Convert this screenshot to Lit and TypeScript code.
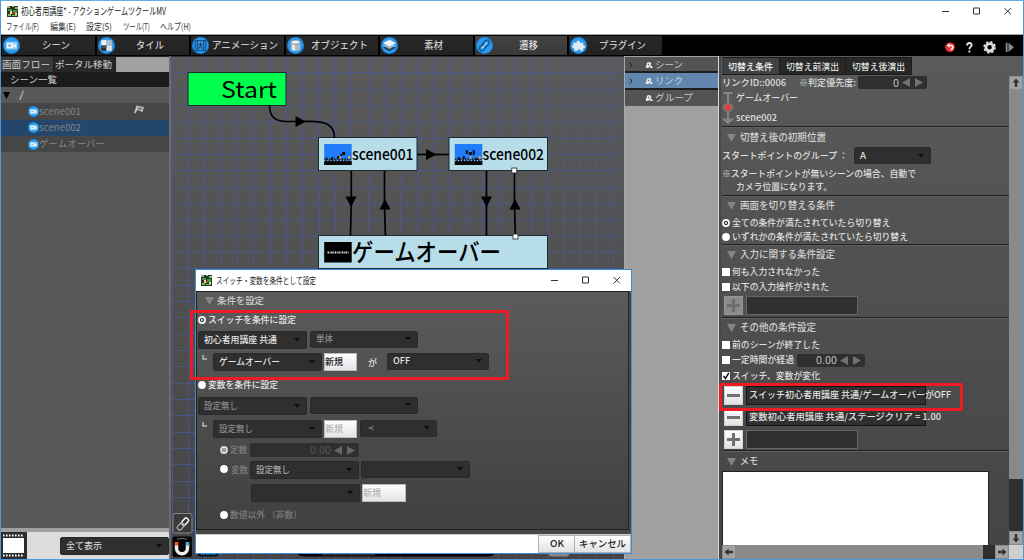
import { LitElement, html, svg, css, nothing } from "lit";
import { customElement, property } from "lit/decorators.js";

/** A label squeezed or stretched horizontally to an exact width. */
@customElement("fit-label")
class FitLabel extends LitElement {
  @property() text = "";
  @property({ type: Number }) w = 0;
  static styles = css`
    :host { display: block; flex: none; white-space: pre; line-height: 1; }
    span { display: inline-block; transform-origin: 0 50%; white-space: pre; }
  `;
  render() {
    return html`<span>${this.text}</span>`;
  }
  updated() {
    const el = this.renderRoot.querySelector("span") as HTMLElement;
    el.style.transform = "none";
    const natural = el.getBoundingClientRect().width;
    this.style.width = `${this.w}px`;
    if (natural) el.style.transform = `scaleX(${this.w / natural})`;
  }
}

const t = (text: string, w: number, cls = "") =>
  html`<fit-label class=${cls} .text=${text} .w=${w}></fit-label>`;

const appIcon = html`<svg class="app-icon" viewBox="0 0 11 11">
  <rect width="11" height="11" fill="#26382a" />
  <path d="M0 0h3v2H0zM5 0h2v1H5zM8 1h3v2H8z" fill="#9bb08a" />
  <path d="M1 3h4v2H1zM6 4h4v3H6z" fill="#3f9a45" />
  <path d="M3 5h2v3H3zM8 7h2v2H8z" fill="#e8d9a0" />
  <path d="M5 6h2v2H5z" fill="#c43a2c" />
  <path d="M1 8h3v2H1zM5 9h5v1H5z" fill="#74c45a" />
</svg>`;

const disc = svg`<circle cx="8" cy="8" r="8" fill="#1a86e0"/><circle cx="8" cy="8" r="7" fill="#2b9bf0"/>`;

const glyphs: Record<string, unknown> = {
  scene: svg`<path d="M2.600 4.400h10.800v7.400H2.600z" fill="#8ccaf4"/><path d="M3.600 5.600h6v5h-6zM9.800 8l2.800-2v4.400L9.800 9z" fill="#f1f8fc"/><path d="M5 7h2.600v2H5z" fill="#62aee2"/>`,
  tile: svg`<path d="M3 3h5v5H3z" fill="#f2f2f2"/><path d="M8 3h5v5H8z" fill="#b5bcc2"/><path d="M3 8h5v5H3z" fill="#2a2d30"/><path d="M8 8h5v5H8z" fill="#e2e4e6"/><path d="M3 8h5v2H3z" fill="#54585c"/>`,
  anim: svg`<rect x="3" y="3.400" width="10" height="9.400" fill="#3c96dc" stroke="#0c538f"/><path d="M5 3.400v9.400M11 3.400v9.400M8 5v3M6.200 7h3.600M8 8l-1.600 3M8 8l1.600 3" stroke="#0b4377" fill="none"/>`,
  object: svg`<path d="M3.600 4.800v6.400c0 2.400 8.800 2.400 8.800 0V4.800z" fill="#b3bcc1"/><path d="M5 6v6.200c1 .5 2 .6 2.600.7V6.500z" fill="#e6eaec"/><ellipse cx="8" cy="4.800" rx="4.400" ry="1.900" fill="#eef2f3" stroke="#63727c" stroke-width=".7"/>`,
  asset: svg`<path d="M1.800 10.200 8 7l6.200 3.200L8 13.500z" fill="#274252"/><path d="M1.800 7.900 8 4.800l6.200 3.100L8 11.200z" fill="#8fb9d0"/><path d="M1.800 5.600 8 2.500l6.200 3.100L8 8.900z" fill="#f0f5f7"/>`,
  link: svg`<g fill="none" stroke="#175080" stroke-width="1.100"><rect x="7.200" y="2.800" width="4.600" height="6.600" rx="2.200" transform="rotate(42 9.500 6)"/><rect x="4" y="6.600" width="4.600" height="6.600" rx="2.200" transform="rotate(42 6.300 10)"/></g><path d="M5.800 10.400 10.200 5.600" stroke="#b6daf0" stroke-width="1.200"/>`,
  plugin: svg`<path d="M3 5.500h3.200c-.8-2.600 3.900-2.600 3.200 0h3v2.600c2.600-.6 2.600 3 0 2.400V13H9.600c.5-2-2.900-2-2.400 0H4v-2.500c-2.500.5-2.500-2.600-1-2.400z" fill="#dfe9ee"/>`,
};

const round = (name: string, cls: string) =>
  html`<svg class=${cls} viewBox="0 0 16 16">${disc}${glyphs[name]}</svg>`;

const film = svg`<rect width="26" height="27" fill="#2c2c2c"/><rect x="2" y="6" width="21" height="15" fill="#fff"/>
  <path d="M2 3.500h21M2 23.500h21" stroke="#fff" stroke-width="2" stroke-dasharray="1.600 1.400"/>`;

const tabs: [string, string, number][] = [
  ["scene", "シーン", 28],
  ["tile", "タイル", 28],
  ["anim", "アニメーション", 66],
  ["object", "オブジェクト", 57],
  ["asset", "素材", 19],
  ["link", "遷移", 19],
  ["plugin", "プラグイン", 47],
];

const GRID = 16.33;

@customElement("app-root")
class AppRoot extends LitElement {
  static styles = css`
    :host { display: block; width: 1024px; height: 560px; overflow: hidden; font: 9.2px "Noto Sans CJK JP", sans-serif; color: #dadada; }
    * { box-sizing: border-box; }
    svg { display: block; flex: none; }
    .window { position: relative; width: 1024px; height: 560px; border: 1px solid #4e97dc; border-top: 1px solid #6aaae6; background: #555; display: flex; flex-direction: column; }
    .titlebar { height: 20px; background: #fff; color: #222; display: flex; align-items: center; padding: 0 12px 0 6px; gap: 3px; font-size: 10px; }
    .app-icon { width: 11px; height: 11px; }
    .win-ctl { margin-left: auto; width: 70px; height: 8px; }
    .menu { height: 14px; background: #fff; color: #333; display: flex; align-items: center; padding: 0 0 1px 5px; gap: 10.500px; font-size: 9.200px; border-bottom: 1px solid #a8a8a8; }
    .tabbar { height: 21px; background: #000; display: flex; padding: 1px 0 1px 1px; gap: 2px; font-size: 9.800px; font-weight: 500; color: #c9c9c9; }
    .tab { width: 92.500px; height: 19px; background: linear-gradient(#292929, #222); display: flex; align-items: center; padding-left: 1px; }
    .tab.on { background: linear-gradient(#434343, #383838); color: #ddd; }
    .tab svg { width: 17px; height: 17px; }
    .tab-label { flex: 1; display: flex; justify-content: center; padding-right: 3px; }
    .tools { margin-left: auto; padding: 3px 7px 0 0; }
    .body { flex: 1; display: flex; min-height: 0; }

    .tree { width: 168px; background: #595959; display: flex; flex-direction: column; color: #d0d0d0; border-top: 1px solid #222; }
    .tree-tabs { display: flex; height: 15px; background: #a0a0a0; font-size: 9.500px; }
    .tree-tabs div { background: #3a3a3a; padding: 3px 3px 0 1px; border-right: 1px solid #1a1a1a; }
    .tree-tabs div + div { background: #272727; }
    .tree-title { height: 15px; background: #1b1b1b; padding: 3px 0 0 9px; font-size: 9.500px; }
    .tree-row { height: 16.330px; display: flex; align-items: center; color: #858585; font-size: 9.500px; background: #464646; padding-left: 27px; }
    .tree-row.root { background: none; padding-left: 2px; gap: 9px; color: #ddd; }
    .tree-row.on { background: #24466b; }
    .tree-row svg.ball { width: 11px; height: 11px; }
    .flag { margin: -3px 0 0 53px; }
    .tree-foot { margin-top: auto; height: 31px; border-top: 4px solid #a0a0a0; background: #dcdcdc; display: flex; justify-content: space-between; align-items: center; font-weight: 500; }
    .divider { width: 2px; background: #6c6c6c; }
    .canvas { position: relative; width: 453px; background: linear-gradient(#5a5a5a, #444); overflow: hidden; }
    .layers { width: 95px; background: #a0a0a0; border-left: 1px solid #a8a8a8; border-right: 1px solid #d8d8d8; display: flex; flex-direction: column; padding-top: 1px; }
    .layer { height: 16.330px; background: #535353; border-bottom: 2px solid #1d1d1d; display: flex; align-items: center; padding: 1px 0 0 4px; font-size: 9.500px; color: #c8c8c8; }
    .layer.on { background: #6287ae; color: #c3d0dd; }
    .layer:last-child { border-bottom: 1px solid #555; }
    .layer svg.chev { width: 4px; height: 6px; margin-right: 12px; }
    .layer svg.hand { width: 8px; height: 8px; margin-right: 2px; }

    .props { flex: 1; display: grid; grid-template-columns: 1fr 14px; grid-template-rows: 1fr 14px; background: linear-gradient(#5a5a5a, #444); border-left: 2px solid #484848; color: #dedede; font-weight: 500; }
    .fields { display: grid; grid-template-rows: 20px 13px 37px 21px 17px 31px 20px 15px 14px 20px 15px 15px 23px 20px 15px 16px 16px 22px 22px 22px 21px 74px; padding-left: 1px; }
    .fields > div { display: flex; align-items: center; min-height: 0; }
    .fields > .ptabs { align-items: flex-start; padding-top: 1px; font-size: 9.500px; }
    .ptab { height: 18px; padding: 4px 6px 0; background: #272727; border: 1px solid #1c1c1c; border-left: 0; }
    .ptab.on { background: #414141; color: #f0f0f0; }
    .head { border-top: 1px solid #222; box-shadow: inset 0 1px #606060; padding: 1px 0 0 5px; gap: 4px; font-size: 9.700px; color: #cfcfcf; }
    .head svg { width: 9px; height: 8px; }
    .num { display: flex; align-items: center; justify-content: flex-end; gap: 3px; background: #2f2f2f; border-radius: 2px; height: 13px; padding-right: 4px; color: #c0c0c0; font-size: 10px; font-weight: 400; }
    .num svg { width: 21px; height: 9px; }
    .sel { background: #2f2f2f; border: 1px solid #292929; border-radius: 2px; height: 18px; display: flex; align-items: center; padding: 0 6px 0 5px; }
    .sel svg { width: 6px; height: 4px; margin-left: auto; opacity: .9; }
    .sel.short { height: 17px; }
    .w68 { width: 68px; } .w69 { width: 69px; } .w77 { width: 77px; } .w101 { width: 102px; } .w108 { width: 108.500px; } .w109 { width: 109px; }
    .num.w108 { height: 14px; }
    .dim { color: #8a8a8a; }
    .soft { color: #a5a5a5; }
    .links { gap: 2px; }
    .ends { display: flex; flex-direction: column; gap: 11px; }
    .g2 { width: 2px; } .g3 { width: 3px; } .g6 { width: 6px; } .g13 { width: 13px; }
    .fields > .note { flex-direction: column; align-items: flex-start; padding-top: 5px; gap: 4px; }
    .note .second { margin-left: 14px; }
    .mark { width: 8px; height: 8px; margin-right: 2px; }
    .btn { width: 19px; height: 19px; background: linear-gradient(#fff, #e2e2e2); border: 1px solid #d0d0d0; flex: none; display: flex; align-items: center; justify-content: center; }
    .btn svg { width: 13px; height: 13px; }
    .btn.off { background: #8b8b8b; border-color: #979797; }
    .item { padding-left: 2px; gap: 3px; }
    .box { height: 19px; width: 112px; background: #303030; border: 1px solid #666; }
    .box.dark { width: 180px; border-color: #141414; display: flex; align-items: center; padding-left: 2px; white-space: nowrap; color: #e2e2e2; }
    .item.low .btn, .item.low .box { height: 18px; }
    .memo { width: 267px; height: 74px; background: #fff; border: 1px solid #222; border-bottom: 0; }
    .vscroll { margin-top: 20px; background: #2f2f2f; display: flex; flex-direction: column; }
    .vscroll .thumb { height: 389px; background: #898989; }
    .arrow { width: 14px; height: 14px; background: #a3a3a3; border: 1px solid #8a8a8a; }
    .arrow svg { width: 12px; height: 12px; }
    .vscroll .arrow:last-child { margin-top: auto; }
    .hscroll { display: flex; background: #2f2f2f; margin-left: 1px; }
    .hscroll .thumb { width: 247px; background: #898989; }
    .hscroll .arrow:last-child { margin-left: auto; }
    .corner { background: #cfcfcf; }

    .dialog { position: absolute; left: 194px; top: 268px; width: 437px; height: 284.500px; border: 1px solid #3c8fd6; background: #484848; display: flex; flex-direction: column; }
    .dtitle { height: 20.500px; background: #fff; color: #222; display: flex; align-items: center; padding: 0 11px 0 5px; gap: 4px; font-size: 9px; }
    .dbody { width: 432.500px; height: 239px; border: 1px solid #222; background: linear-gradient(#5b5b5b, #404040); display: grid; grid-template-rows: 18px 20px 22px 22px 22px 23px 22px 19px 23px 22px 21px; padding-left: 1px; color: #e4e4e4; font-weight: 500; }
    .dbody > div { display: flex; align-items: center; }
    .dbody > .top { align-items: flex-start; gap: 2.500px; padding-top: 1px; }
    .dbody > .dhead { padding-left: 7px; gap: 3px; font-size: 9.500px; color: #ccc; }
    .dhead svg { width: 9px; height: 8px; }
    .elbow { width: 5px; height: 5px; margin: 2px 6px 0 4px; }
    .dbody > .nest { gap: 0; }
    .nest .new { margin: 0 2.500px 0 2.500px; }
    .new { height: 18px; width: 33px; background: linear-gradient(#fff, #e4e4e4); border: 1px solid #bbb; color: #222; display: flex; align-items: center; }
    .new.off { color: #b5b5b5; }
    .new.wide { width: 44px; }
    .ga { padding: 5px 10px 0 8.500px; }
    .sub { padding-left: 22px; }
    .sub .dim { margin-right: 3px; color: #7d7d7d; }
    .dbody > .sub.top .mark { margin-top: 4px; margin-right: 0; }
    .dbody > .sub.top .dim.lbl { margin: 4px 0 0; }
    .deep { padding-left: 53px; }
    .num.dim { color: #555; }
    .dfoot { margin-top: auto; height: 18.500px; background: #fff; display: flex; justify-content: flex-end; color: #222; font-weight: 500; font-size: 9.500px; border-top: 1px solid #ccc; }
    .dfoot div { background: linear-gradient(#fff, #e2e2e2); border: 1px solid #b0b0b0; display: flex; align-items: center; justify-content: center; width: 37px; }
    .dfoot div + div { width: 56px; border-left: 0; }
    .mark-red { position: absolute; border: 3px solid #ed1c24; }
    .mark-red.a { left: 189px; top: 309px; width: 319px; height: 70px; }
    .mark-red.b { left: 718px; top: 382px; width: 244px; height: 28px; }
  `;

  tri = html`<svg viewBox="0 0 9 8"><path d="M0 0h9L4.500 8z" fill="#858585" /></svg>`;
  caret = html`<svg viewBox="0 0 6 4"><path d="M0 0h6L3 3.600z" fill="#0c0c0c" /></svg>`;

  winCtl() {
    return html`<svg class="win-ctl" viewBox="0 0 70 8"><path d="M1 4.500h7M32.500 1h6v6h-6zM63.500 1l6.500 6.500M70 1l-6.500 6.500" fill="none" stroke="#333" stroke-width="1" /></svg>`;
  }
  spin(w: string, text: string, tw: number, cls = "", fill = "#727272") {
    return html`<div class="num ${w} ${cls}">${t(text, tw)}<svg viewBox="0 0 21 9"><path d="M8 0v9L0 4.500zM13 0v9l8-4.500z" fill=${fill} /></svg></div>`;
  }
  sel(w: string, text = "", tw = 0, cls = "") {
    return html`<div class="sel ${w} ${cls}">${text ? t(text, tw) : nothing}${this.caret}</div>`;
  }
  head(text: string, w: number) {
    return html`<div class="head">${this.tri}${t(text, w)}</div>`;
  }
  radio(on: boolean, soft = false) {
    return html`<svg class="mark" viewBox="0 0 8 8"><circle cx="4" cy="4" r="3.900" fill=${soft ? "#ddd" : "#fff"} />${on ? svg`<circle cx="4" cy="4" r="1.700" fill=${soft ? "#aaa" : "#ddd"} stroke=${soft ? "#888" : "#222"} stroke-width="1"/>` : nothing}</svg>`;
  }
  check(on: boolean) {
    return html`<svg class="mark" viewBox="0 0 8 8"><rect width="8" height="8" fill="#fff" />${on ? svg`<path d="M1.500 4 3.500 6.500 6.800.8" fill="none" stroke="#111" stroke-width="1.500"/>` : nothing}</svg>`;
  }
  sign(plus: boolean, fill = "#707070") {
    return html`<svg viewBox="0 0 13 13"><path d=${plus ? "M5 0h3v5h5v3H8v5H5V8H0V5h5z" : "M0 5h13v3H0z"} fill=${fill} /></svg>`;
  }
  arrow(deg: number) {
    return html`<div class="arrow"><svg viewBox="0 0 12 12"><path d="M6 1.500l3.500 4H7.200V10H4.800V5.500H2.500z" fill="#333" transform="rotate(${deg} 6 6)" /></svg></div>`;
  }

  // The diagram uses window coordinates, so its viewBox starts at the pane's corner.
  diagram() {
    const vs = Array.from({ length: 28 }, (_, i) => Math.floor(172.3 + i * GRID) + 0.5);
    const hs = Array.from({ length: 31 }, (_, i) => Math.floor(56.6 + i * GRID) + 0.5);
    const node = (x: number, y: number, w: number, fill: string) =>
      svg`<rect x=${x} y=${y} width=${w} height="33" fill=${fill} stroke="#1c2b30" stroke-width="1"/>`;
    const head = (x: number, y: number, deg: number) =>
      svg`<path d="M-5 -5.500 5.500 0 -5 5.500z" transform="translate(${x} ${y}) rotate(${deg})"/>`;
    const thumb = (x: number, art: string) => svg`<rect x=${x} y="144" width="27.500" height="21" fill="#1f7dfa"/>
      <path d="M${x} 161h27.500v4H${x}z" fill="#080808"/>
      <path d="M${x} 160h27.500" stroke="#111" stroke-width="3" stroke-dasharray="1.500 1"/>
      <path d="M${x} 160.500h27.500" stroke="#ddd" stroke-width="1.500" stroke-dasharray=".8 2.400"/>
      <path d=${art} transform="translate(${x} 144)" fill="#111"/>
      <path d="M${x + 15} 156h1.500v3h-1.500zM${x + 24} 156h2v3h-2z" fill="#e0a040"/>`;
    return html`<svg width="453" height="503" viewBox="171 56 453 503" font-family="Noto Sans CJK JP, sans-serif" font-weight="500">
      <g stroke="#49599a" stroke-width="1" opacity=".75">
        ${vs.map((x) => svg`<path d="M${x} 56V559"/>`)}
        ${hs.map((y) => svg`<path d="M171 ${y}H621"/>`)}
      </g>
      <path d="M171 56.500H624" stroke="#333" />
      ${node(188, 72.5, 98, "#00ff4c")}
      ${node(318.5, 137.5, 98.5, "#b7dde8")}
      ${node(449, 137.5, 98.5, "#b7dde8")}
      ${node(318.5, 235.5, 229, "#b7dde8")}
      <g fill="none" stroke="#000" stroke-width="1.700">
        <path d="M269.500 105.500c0 11 5 16 17 16h18c21-1 30 3 30 16.500" />
        <path d="M417 154.500H449" />
        <path d="M351.300 171V203L350.500 235.500M384.500 171V203L385.300 235.500M486.500 171V235.500M514.500 171V203L515.300 235.500" />
      </g>
      ${head(300.5, 121.5, 0)}${head(431, 154.5, 0)}${head(351, 201.5, 90)}${head(385, 204.5, -90)}${head(486.5, 201.5, 90)}${head(515, 204.5, -90)}
      <g fill="#fff" stroke="#222" stroke-width=".8"><rect x="511.800" y="168" width="5" height="5" /><rect x="513" y="234" width="5" height="5" /></g>
      ${thumb(324.2, "M18 8h3v3h-3zM16 10h2v2h-2zM7 13h2v3H7zM13 12h3v3h-3zM2 13h1v3H2z")}
      ${thumb(454.8, "M11 6h2v4h-2zM14 8h3v3h-3zM18 6h2v5h-2zM3 13h2v3H3zM8 12h2v3H8zM20 14h3v2h-3z")}
      <rect x="324.200" y="242" width="27.500" height="20.500" />
      <path d="M327.500 252.500h21" stroke="#ddd" stroke-width="2" stroke-dasharray="1.500 .7 .8 .6" />
      <text x="221" y="97.700" font-size="22.500" font-weight="400" textLength="56" lengthAdjust="spacingAndGlyphs">Start</text>
      <text x="352" y="159.500" font-size="15" textLength="61.500" lengthAdjust="spacingAndGlyphs">scene001</text>
      <text x="482.500" y="159.500" font-size="15" textLength="61.500" lengthAdjust="spacingAndGlyphs">scene002</text>
      <text x="352" y="260.500" font-size="24" textLength="149" lengthAdjust="spacingAndGlyphs">ゲームオーバー</text>
      <rect x="173" y="513.500" width="19" height="19.500" rx="2" fill="#3a3a3a" stroke="#888" />
      <g fill="none" stroke-width="1.400"><rect x="-2" y="-6.500" width="4.500" height="7.500" rx="1.500" stroke="#fff" transform="translate(183 523.500) rotate(42)" /><rect x="-2" y="0" width="4.500" height="7.500" rx="1.500" stroke="#aaa" transform="translate(183 523.500) rotate(42)" /></g>
      <rect x="172.500" y="536.500" width="19.500" height="20.500" rx="2" fill="#050505" />
      <path d="M176.500 545v3c0 7.500 11 7.500 11 0v-3" fill="none" stroke="#eee" stroke-width="3.500" />
      <path d="M174.700 542h3.600v3.500h-3.600z" fill="#f25c2e" /><path d="M185.700 542h3.600v3.500h-3.600z" fill="#37b5ee" />
      <path d="M177 539.500c3-1.500 7-1.500 10 0" stroke="#777" fill="none" />
      <rect x="198" y="538" width="20" height="18.500" rx="2" fill="#071018" />
      <path d="M201 554h14" stroke="#1a8fd6" stroke-width="2" stroke-dasharray="1.500 1" />
      <rect x="297" y="540" width="198" height="16.500" rx="6" fill="#000" /><rect x="321" y="540" width="55" height="15.500" rx="3" fill="#333" />
      <rect x="549" y="540" width="20" height="16.500" rx="2" fill="#888" /><path d="M605 553.500h11" stroke="#bbb" />
    </svg>`;
  }

  props() {
    return html`<div class="props">
      <div class="fields">
        <div class="ptabs"><div class="ptab on">${t("切替え条件", 45)}</div><div class="ptab">${t("切替え前演出", 53)}</div><div class="ptab">${t("切替え後演出", 53)}</div></div>
        <div>${t("リンクID::0006", 64)}<span class="g13"></span>${t("※判定優先度:", 57)}<span class="g2"></span>${this.spin("w69", "0", 6)}</div>
        <div class="links">
          <svg width="12" height="35" viewBox="0 0 12 35"><path d="M1.500 3h9M6 3v28M2 29.500h8L6 33z" stroke="#858585" stroke-width="2" fill="#858585" /><circle cx="6" cy="17.500" r="5" fill="#777" /><circle cx="6" cy="17.500" r="2.900" fill="#f03838" /></svg>
          <div class="ends">${t("ゲームオーバー", 62)}${t("scene002", 41)}</div>
        </div>
        ${this.head("切替え後の初期位置", 86)}
        <div>${t("スタートポイントのグループ ：", 126)}<span class="g6"></span>${this.sel("w77", "A", 6, "short")}</div>
        <div class="note">${t("※スタートポイントが無いシーンの場合、自動で", 194)}${t("カメラ位置になります。", 96, "second")}</div>
        ${this.head("画面を切り替える条件", 95)}
        <div>${this.radio(true)}${t("全ての条件が満たされていたら切り替え", 158.5)}</div>
        <div>${this.radio(false)}${t("いずれかの条件が満たされていたら切り替え", 176)}</div>
        ${this.head("入力に関する条件設定", 95)}
        <div>${this.check(false)}${t("何も入力されなかった", 88)}</div>
        <div>${this.check(false)}${t("以下の入力操作がされた", 97)}</div>
        <div class="item"><div class="btn off">${this.sign(true, "#6d6d6d")}</div><div class="box"></div></div>
        ${this.head("その他の条件設定", 76)}
        <div>${this.check(false)}${t("前のシーンが終了した", 88)}</div>
        <div>${this.check(false)}${t("一定時間が経過", 62)}<span class="g3"></span>${this.spin("w68", "0.00", 21)}</div>
        <div>${this.check(true)}${t("スイッチ、変数が変化", 88)}</div>
        <div class="item"><div class="btn">${this.sign(false)}</div><div class="box dark">${t("スイッチ初心者用講座 共通/ゲームオーバーがOFF", 202)}</div></div>
        <div class="item low"><div class="btn">${this.sign(false)}</div><div class="box dark">${t("変数初心者用講座 共通/ステージクリア = 1.00", 192)}</div></div>
        <div class="item"><div class="btn">${this.sign(true)}</div><div class="box"></div></div>
        ${this.head("メモ", 18)}
        <div class="memo"></div>
      </div>
      <div class="vscroll">${this.arrow(0)}<div class="thumb"></div>${this.arrow(180)}</div>
      <div class="hscroll">${this.arrow(-90)}<div class="thumb"></div>${this.arrow(90)}</div>
      <div class="corner"></div>
    </div>`;
  }

  dialog() {
    const elbow = html`<svg class="elbow" viewBox="0 0 5 5"><path d="M1 0v4h4" fill="none" stroke="#bbb" stroke-width="1.500" /></svg>`;
    return html`<div class="dialog">
      <div class="dtitle">${appIcon}${t("スイッチ・変数を条件として設定", 100)}${this.winCtl()}</div>
      <div class="dbody">
        <div class="dhead">${this.tri}${t("条件を設定", 47)}</div>
        <div>${this.radio(true)}${t("スイッチを条件に設定", 88)}</div>
        <div class="top">${this.sel("w109", "初心者用講座 共通", 73)}${this.sel("w108", "単体", 17, "short dim")}</div>
        <div class="top nest">${elbow}${this.sel("w108", "ゲームオーバー", 61)}<div class="new">${t("新規", 18)}</div><div class="ga">${t("が", 9)}</div>${this.sel("w101", "OFF", 17, "short")}</div>
        <div>${this.radio(false)}${t("変数を条件に設定", 70)}</div>
        <div class="top dim">${this.sel("w109", "設定無し", 34)}${this.sel("w108", "", 0, "short")}</div>
        <div class="top nest dim">${elbow}${this.sel("w108", "設定無し", 34)}<div class="new off">${t("新規", 18)}</div>${this.sel("w77", " <", 8, "short")}</div>
        <div class="sub">${this.radio(true, true)}${t("定数", 17, "dim")}${this.spin("w108", "0.00", 21, "dim", "#666")}</div>
        <div class="sub top">${this.radio(false)}${t("変数", 17, "dim lbl")}${this.sel("w108", "設定無し", 34, "soft")}${this.sel("w108", "", 0, "short")}</div>
        <div class="deep top">${this.sel("w108")}<div class="new off wide">${t("新規", 18)}</div></div>
        <div class="sub">${this.radio(false)}${t("数値以外 （非数）", 72, "dim")}</div>
      </div>
      <div class="dfoot"><div>${t("OK", 14)}</div><div>${t("キャンセル", 47)}</div></div>
    </div>`;
  }

  render() {
    const layer = (text: string, w: number, i: number) => html`<div class="layer ${i === 1 ? "on" : ""}">
      <svg class="chev" viewBox="0 0 4 6">${i < 2 ? svg`<path d="M.8.5 3 3 .8 5.500" fill="none" stroke="#222"/>` : nothing}</svg>
      <svg class="hand" viewBox="0 0 9 9"><path d="M2 4.500V2l2-1 3 1v3l2 3H6L5 6 4 8H1V5z" fill="#e8e8e8" /><path d="M4 3v2M6 4.500h1" stroke="#444" stroke-width=".8" /></svg>
      ${t(text, w)}</div>`;
    const row = (text: string, w: number, i: number) => html`<div class="tree-row ${i === 1 ? "on" : ""}">${round("scene", "ball")}${t(text, w)}
      ${i === 0 ? html`<svg class="flag" width="11" height="9" viewBox="0 0 11 9"><path d="M2.500.5 10 2 8.500 7 3.500 5 1 8.500 0 8z" fill="#c4c4c4" /><path d="M3.500 2.500l5 2M4 4.500l4.500-2M6 1.500l-.5 4" stroke="#5a5a5a" stroke-width=".7" /></svg>` : nothing}</div>`;
    return html`<div class="window">
        <div class="titlebar">${appIcon}${t("初心者用講座* - アクションゲームツクールMV", 145)}${this.winCtl()}</div>
        <div class="menu">${t("ファイル(F)", 33)}${t("編集(E)", 26)}${t("設定(S)", 26)}${t("ツール(T)", 27)}${t("ヘルプ(H)", 31)}</div>
        <div class="tabbar">
          ${tabs.map(([icon, label, w], i) => html`<div class="tab ${i === 5 ? "on" : ""}">${round(icon, "")}<div class="tab-label">${t(label, w)}</div></div>`)}
          <svg class="tools" width="78" height="19" viewBox="0 0 71 16">
            <g transform="translate(0 .5) scale(.92)"><circle cx="5.500" cy="8.500" r="5.300" fill="#ef2d30" /><path d="M4 6.500h2.500c3 0 2.500 4-.5 4.500" fill="none" stroke="#fff" stroke-width="1.800" /><path d="M5 4v5L1.800 6.500z" fill="#fff" />
            <path d="M24 6.500c0-3.500 5-3.500 5-.5 0 2-2.500 2-2.500 4.500M26.500 12v2" fill="none" stroke="#e6e6e6" stroke-width="2" />
            <circle cx="48.500" cy="8.500" r="4" fill="none" stroke="#ddd" stroke-width="3.200" /><circle cx="48.500" cy="8.500" r="6" fill="none" stroke="#ddd" stroke-width="1.800" stroke-dasharray="2.500 2.212" />
            <path d="M66 3.500h2v10h-2zM69 3.500l6 5-6 5z" fill="#8a8a8a" /></g>
          </svg>
        </div>
        <div class="body">
          <div class="tree">
            <div class="tree-tabs"><div>${t("画面フロー", 48)}</div><div>${t("ポータル移動", 57)}</div></div>
            <div class="tree-title">${t("シーン一覧", 47)}</div>
            <div class="tree-row root"><svg width="7" height="7" viewBox="0 0 7 7"><path d="M0 0h7L3.500 7z" fill="#000" /></svg>${t("/", 5)}</div>
            ${row("scene001", 42, 0)}${row("scene002", 42, 1)}${row("ゲームオーバー", 66, 2)}
            <div class="tree-foot"><svg width="26" height="27" viewBox="0 0 26 27">${film}</svg>${this.sel("w109", "全て表示", 36)}</div>
          </div>
          <div class="divider"></div>
          <div class="canvas">${this.diagram()}</div>
          <div class="layers">${layer("シーン", 28, 0)}${layer("リンク", 28, 1)}${layer("グループ", 38, 2)}</div>
          ${this.props()}
        </div>
        ${this.dialog()}
        <div class="mark-red a"></div>
        <div class="mark-red b"></div>
      </div>`;
  }
}
